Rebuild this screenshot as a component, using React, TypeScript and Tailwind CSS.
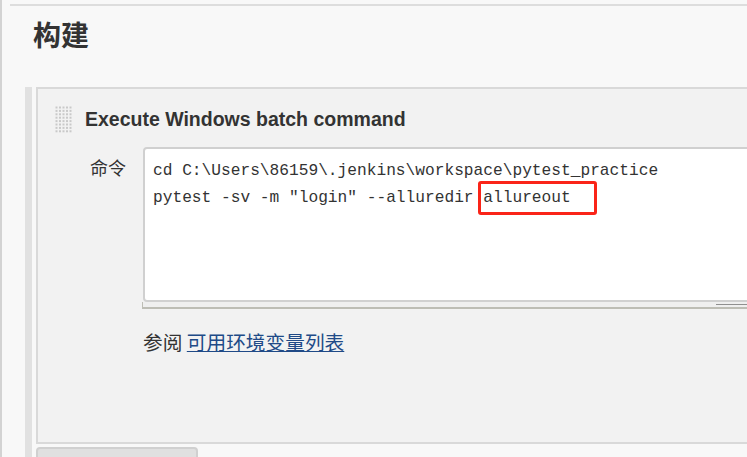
import React from 'react';

const Grip = () => {
  const dots = [];
  for (let r = 0; r < 8; r++) {
    for (let c = 0; c < 5; c++) {
      dots.push(<rect key={`${r}-${c}`} x={c * 3.5 + 0.5} y={r * 3.4 + 0.5} width="2" height="2" fill="#c9c9c9" />);
    }
  }
  return (
    <svg width="18" height="27" viewBox="0 0 18 27" className="shrink-0">
      {dots}
    </svg>
  );
};

const App = () => {
  return (
    <div className="w-[747px] h-[457px] overflow-hidden bg-[#f8f8f8] border-l-2 border-[#d3d3d3] flex flex-col">
      {/* top rule */}
      <div className="shrink-0 ml-[8px] mt-[4px] h-[2px] bg-[#dddddd]" />

      <h1 className="shrink-0 pl-[31px] pt-[10px] h-[81px] text-[28px] leading-[36px] font-bold text-[#333] [font-family:'Noto_Sans_CJK_SC',sans-serif]">
        构建
      </h1>

      <div className="flex shrink-0 ml-[23px]">
        {/* drag bar */}
        <div className="w-[7px] bg-[#e1e1e1] shrink-0" />

        <div className="ml-[4px] flex flex-col">
          {/* builder panel */}
          <div className="w-[760px] h-[357px] border-2 border-[#d9d9d9] bg-[#f2f2f2] pl-[17px] pt-[16px]">
            <div className="flex items-center gap-[12px]">
              <Grip />
              <span className="text-[19.5px] font-bold text-[#333] [font-family:'Liberation_Sans',Arial,sans-serif]">
                Execute Windows batch command
              </span>
            </div>

            <div className="flex mt-[13px]">
              <div className="w-[88px] pl-[35px] pt-[8px] text-[18px] leading-[24px] text-[#333] [font-family:'Noto_Sans_CJK_SC',sans-serif]">
                命令
              </div>
              <div className="flex flex-col">
                <div className="relative w-[620px] h-[155px] bg-white border-2 border-[#d0d0d0] rounded-[4px] pl-[8px] pt-[9px] text-[16.2px] leading-[27px] text-[#333] [font-family:'Liberation_Mono',monospace] whitespace-pre">
                  <div>{'cd C:\\Users\\86159\\.jenkins\\workspace\\pytest_practice'}</div>
                  <div>{'pytest -sv -m "login" --alluredir allureout'}</div>
                  <div className="absolute left-[333px] top-[32px] w-[119px] h-[34px] border-[3px] border-[#fa2418] rounded-[3px]" />
                </div>
                <div className="-ml-[1px] h-[7px] bg-[#efefef] border-l border-b-2 border-[#bdbdb5] flex justify-end">
                  <div className="mt-[2px] w-[40px] h-[1px] bg-[#8f8f8f] mr-[7px]" />
                </div>
              </div>
            </div>

            <div className="mt-[20px] pl-[88px] text-[19.7px] leading-[26px] text-[#333] [font-family:'Noto_Sans_CJK_SC',sans-serif]">
              参阅 <a href="#" className="text-[#204a87] underline">可用环境变量列表</a>
            </div>
          </div>

          {/* next section tab */}
          <div className="mt-[3px] w-[162px] h-[20px] bg-[#e0e0e0] border-2 border-[#d0d0d0] rounded-t-[4px]" />
        </div>
      </div>
    </div>
  );
};

export default App;
